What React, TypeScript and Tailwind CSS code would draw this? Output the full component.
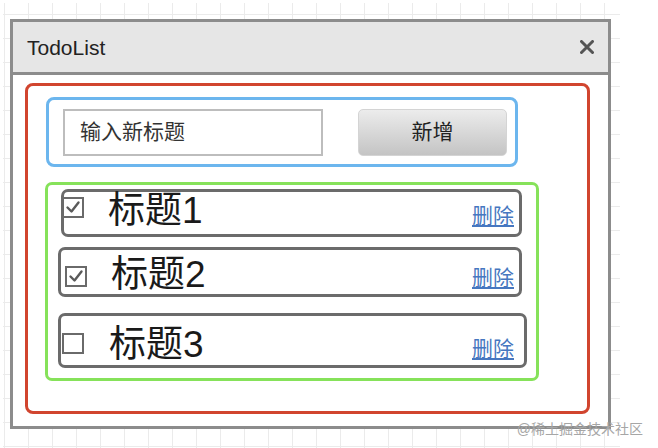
import React from "react";

const FONT = "font-['Liberation_Sans','Noto_Sans_CJK_SC',sans-serif]";

function Check({ checked }: { checked: boolean }) {
  return (
    <div className="w-[22px] h-[21px] border-2 border-[#6a6a6a] flex items-center justify-center shrink-0">
      {checked && (
        <svg width="16" height="15" viewBox="0 0 16 15">
          <path d="M2.5 7.5 L6.5 11.5 L13.5 2.5" fill="none" stroke="#5a5a5a" strokeWidth="2.4" strokeLinecap="round" strokeLinejoin="round" />
        </svg>
      )}
    </div>
  );
}

export default function App() {
  return (
    <div className={`relative w-[658px] h-[448px] bg-white overflow-hidden pt-[3px] pl-[3px] ${FONT}`}>
      <div className="w-[617px] h-[445px] bg-[linear-gradient(to_right,#ebebeb_1px,transparent_1px),linear-gradient(to_bottom,#ebebeb_1px,transparent_1px)] bg-[size:24px_24px] bg-[position:1px_11px] pt-[16px] pl-[7px]">
        <div className="w-[601px] h-[410px] border-[3px] border-[#8c8c8c] bg-white flex flex-col">
          <div className="h-[53px] shrink-0 bg-[#e6e6e6] border-b-[3px] border-[#8c8c8c] flex items-center justify-between pl-[14px] pr-[14px]">
            <span className="text-[21px] text-[#222] leading-none">TodoList</span>
            <svg width="14" height="14" viewBox="0 0 14 14">
              <path d="M1.5 1.5 L12.5 12.5 M12.5 1.5 L1.5 12.5" stroke="#555" strokeWidth="3" strokeLinecap="round" />
            </svg>
          </div>
          <div className="flex-1 pl-[12px] pt-[8px]">
            <div className="w-[565px] h-[331px] border-[3px] border-[#d1452f] rounded-[8px] flex flex-col">
              <div className="ml-[18px] mt-[11px] w-[472px] h-[70px] border-[3px] border-[#6cb6ee] rounded-[8px] flex items-center justify-between pl-[14px] pr-[8px]">
                <div className="w-[260px] h-[47px] border-2 border-[#bdbdbd] pl-[15px] flex items-center text-[21px] text-[#333]">
                  输入新标题
                </div>
                <div className="w-[149px] h-[47px] rounded-[5px] bg-linear-to-b from-[#ececec] to-[#c4c4c4] border border-[#d4d4d4] flex items-center justify-center text-[21px] text-[#222]">
                  新增
                </div>
              </div>
              <div className="ml-[17px] mt-[15px] w-[494px] h-[199px] border-[3px] border-[#86e25a] rounded-[7px] pt-[4px] flex flex-col">
                <div className="ml-[13px] w-[461px] h-[48px] border-[3px] border-[#6b6b6b] rounded-[7px] flex items-center">
                  <div className="ml-[-2px] -translate-y-[6px]"><Check checked /></div>
                  <span className="ml-[24px] text-[37px] leading-none text-[#1a1a1a] -translate-y-[3px]">标题1</span>
                  <span className="ml-auto mr-[5px] self-end mb-[8px] text-[21px] leading-none text-[#4677c0] underline underline-offset-2">删除</span>
                </div>
                <div className="mt-[10px] ml-[10px] w-[464px] h-[50px] border-[3px] border-[#6b6b6b] rounded-[7px] flex items-center">
                  <div className="ml-[4px] translate-y-[4px]"><Check checked /></div>
                  <span className="ml-[24px] text-[37px] leading-none text-[#1a1a1a] translate-y-[2px]">标题2</span>
                  <span className="ml-auto mr-[5px] self-end mb-[6px] text-[21px] leading-none text-[#4677c0] underline underline-offset-2">删除</span>
                </div>
                <div className="mt-[16px] ml-[10px] w-[469px] h-[55px] border-[3px] border-[#6b6b6b] rounded-[7px] flex items-center">
                  <div className="ml-[1px] translate-y-[3px]"><Check checked={false} /></div>
                  <span className="ml-[25px] text-[37px] leading-none text-[#1a1a1a] translate-y-[4px]">标题3</span>
                  <span className="ml-auto mr-[10px] self-end mb-[6px] text-[21px] leading-none text-[#4677c0] underline underline-offset-2">删除</span>
                </div>
              </div>
            </div>
          </div>
        </div>
      </div>
      <div className="absolute right-[15px] bottom-[12px] text-[14px] leading-none text-[#a6a6a6]">@稀土掘金技术社区</div>
    </div>
  );
}
